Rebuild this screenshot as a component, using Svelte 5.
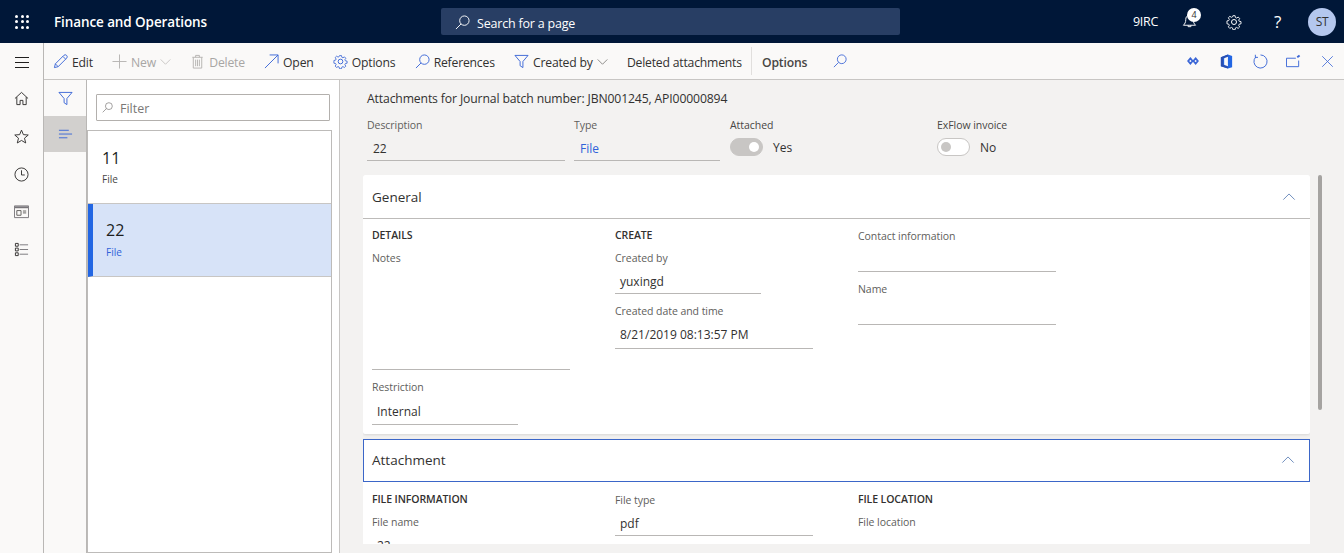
<script>
	const actions = [
		{ label: 'Edit', icon: 'edit' },
		{ label: 'New', icon: 'plus', off: true, chevron: true },
		{ label: 'Delete', icon: 'trash', off: true },
		{ label: 'Open', icon: 'open' },
		{ label: 'Options', icon: 'gear' },
		{ label: 'References', icon: 'search' },
		{ label: 'Created by', icon: 'funnel', chevron: true },
		{ label: 'Deleted attachments' }
	];
	const records = [
		{ id: '11', type: 'File' },
		{ id: '22', type: 'File', selected: true }
	];
</script>

{#snippet icon(name, size = 16)}
	<svg width={size} height={size} viewBox="0 0 16 16" fill="none" stroke="currentColor" stroke-width="1">
		{#if name === 'edit'}
			<path d="M1.5 14.5l1-4L11.5 1.5a1.6 1.6 0 0 1 3 3L5.5 13.5zM2.5 10.5l3 3M10.500 2.500l3 3" />
		{:else if name === 'plus'}
			<path d="M8 .5v15M.5 8h15" />
		{:else if name === 'trash'}
			<path d="M2.500 3.500h11M6 3.500V1.500h4v2M3.500 3.500v11.500h9V3.500M6 6v7M8 6v7M10 6v7" />
		{:else if name === 'open'}
			<path d="M1 15L15 1M6 1h9v9" />
		{:else if name === 'gear'}
			<circle cx="8" cy="8" r="2.500" />
			<path d="M6.800 1h2.400l.4 2 1.300.6 1.800-1.100 1.600 1.700-1.100 1.700.6 1.300 2 .4v2.400l-2 .4-.6 1.300 1.100 1.800-1.700 1.600-1.700-1.100-1.300.6-.4 2H6.800l-.4-2-1.300-.6-1.800 1.100-1.600-1.700 1.100-1.700-.6-1.300-2-.4V6.800l2-.4.6-1.300L1.700 3.300l1.700-1.600 1.700 1.100 1.300-.6z" transform="translate(.8 .8) scale(.9)" />
		{:else if name === 'search'}
			<circle cx="10" cy="6" r="5" />
			<path d="M6.400 9.600L1 15" />
		{:else if name === 'funnel'}
			<path d="M1 1.500h14L9.500 8v6.500l-3-2V8z" />
		{:else if name === 'chevron'}
			<path d="M1 5l7 7 7-7" />
		{:else if name === 'up'}
			<path d="M1.500 11L8 4.500l6.500 6.500" />
		{:else if name === 'home'}
			<path d="M1 8l7-6.500L15 8M3 6.500V14.500h3.500V10h3v4.500H13V6.500" />
		{:else if name === 'star'}
			<path d="M8 1.200l2 4.800 5.200.4-4 3.400 1.300 5.100L8 12.200l-4.500 2.700 1.300-5.100-4-3.400L6 6z" />
		{:else if name === 'clock'}
			<circle cx="8" cy="8" r="7" />
			<path d="M8 3.500V8.500H11.500" />
		{:else if name === 'workspace'}
			<path d="M.5 2h15v12.500H.5z" stroke="#77757a" />
			<path d="M1 3.500h14" stroke="#77757a" stroke-width="2" />
			<path d="M3 7h4.500v5H3zM9.500 7.500h3.500M9.500 9.500h3.500" stroke="#605e5c" />
		{:else if name === 'list'}
			<path d="M1.500 1.500h3v3h-3zM1.500 6.500h3v3h-3zM1.500 11.500h3v3h-3z" />
			<path d="M6 3h9M6 8h9M6 13h9" stroke="#77757a" />
		{:else if name === 'lines'}
			<path d="M1 3.500h10.500M1 7.500h14M1 11.500h9" />
		{:else if name === 'bell'}
			<path d="M8 1.500c-3 0-4 2-4 4.500 0 3-1 4.500-2.500 6h13C13 10.500 12 9 12 6c0-2.500-1-4.500-4-4.500zM6.500 12v1.500h3V12" />
		{:else if name === 'diamonds'}
			<path d="M5 5L7.500 8 5 11 2.500 8zM11 5L13.500 8 11 11 8.500 8z" stroke-width="2" />
		{:else if name === 'office'}
			<path d="M9.500 .5L2 3.500v9.500L9.500 15.500 14 14V2z" fill="#2266e3" stroke="none" />
			<path d="M2 3.500L9.500 .5V3L4.500 4.500V11.500L9.500 13V15.500L2 13z" fill="#2a4fb0" stroke="none" />
			<path d="M9.500 3L5.500 4.500v7l4 1.500z" fill="#faf9f8" stroke="none" />
		{:else if name === 'refresh'}
			<path d="M8 1a7 7 0 1 1-5 2.100" />
			<path d="M2.500 .8v2.800h2.800" />
		{:else if name === 'popout'}
			<path d="M13.500 7v6.500H.5V4.500h10" />
			<path d="M12 3.500l2.500-2" stroke-width="2" />
		{:else if name === 'close'}
			<path d="M1.500 1.500l13 13M14.500 1.500l-13 13" />
		{/if}
	</svg>
{/snippet}

<div class="page">
	<header class="topbar">
		<div class="waffle">
			{#each Array(9) as _}<span></span>{/each}
		</div>
		<div class="brand">Finance and Operations</div>
		<div class="search">{@render icon('search', 15)}<span>Search for a page</span></div>
		<div class="top-right">
			<span class="company">9IRC</span>
			<span class="bell">{@render icon('bell', 15)}<b>4</b></span>
			<span class="top-icon">{@render icon('gear')}</span>
			<span class="help">?</span>
			<span class="avatar">ST</span>
		</div>
	</header>

	<div class="main">
		<nav class="rail">
			<div class="burger"><span></span><span></span><span></span></div>
			{#each ['home', 'star', 'clock', 'workspace', 'list'] as name}
				<div class="rail-item">{@render icon(name, 15)}</div>
			{/each}
		</nav>

		<div class="work">
			<div class="commands">
				{#each actions as a}
					<div class="cmd" class:off={a.off}>
						{#if a.icon}<span class="cmd-icon">{@render icon(a.icon, 15)}</span>{/if}
						<span class="cmd-label">{a.label}</span>
						{#if a.chevron}<span class="cmd-chev">{@render icon('chevron', 11)}</span>{/if}
					</div>
				{/each}
				<div class="cmd options"><span class="cmd-label">Options</span></div>
				<div class="cmd find">{@render icon('search', 14)}</div>
				<div class="cmd-right">
					<span>{@render icon('diamonds', 14)}</span>
					<span>{@render icon('office', 15)}</span>
					<span>{@render icon('refresh', 15)}</span>
					<span>{@render icon('popout', 15)}</span>
					<span>{@render icon('close', 13)}</span>
				</div>
			</div>

			<div class="panes">
				<div class="filter-rail">
					<div class="fr-item">{@render icon('funnel', 15)}</div>
					<div class="fr-item active">{@render icon('lines', 15)}</div>
				</div>

				<aside class="list-pane">
					<div class="filter-box">{@render icon('search', 11)}<span>Filter</span></div>
					<div class="records">
						{#each records as r}
							<div class="record" class:selected={r.selected}>
								<div class="rec-id">{r.id}</div>
								<div class="rec-type">{r.type}</div>
							</div>
						{/each}
					</div>
				</aside>

				<section class="details">
					<div class="caption">Attachments for Journal batch number: JBN001245, API00000894</div>
					<div class="head-fields">
						<div class="field f-desc">
							<label>Description</label>
							<div class="value">22</div>
						</div>
						<div class="field f-type">
							<label>Type</label>
							<div class="value link">File</div>
						</div>
						<div class="toggle-field f-attached">
							<label class="strong">Attached</label>
							<div class="toggle-row"><span class="toggle on"></span><span>Yes</span></div>
						</div>
						<div class="toggle-field">
							<label class="strong">ExFlow invoice</label>
							<div class="toggle-row"><span class="toggle"></span><span>No</span></div>
						</div>
					</div>

					<div class="scroll-area">
						<div class="cards">
							<div class="card">
								<div class="card-head">
									<span>General</span>
									<span class="card-chev">{@render icon('up', 14)}</span>
								</div>
								<div class="card-body general">
									<div class="col col-a">
										<h4>DETAILS</h4>
										<label class="first">Notes</label>
										<div class="notes"></div>
										<label class="restrict">Restriction</label>
										<div class="value w146 tall">Internal</div>
									</div>
									<div class="col col-b">
										<h4>CREATE</h4>
										<label class="first">Created by</label>
										<div class="value w146">yuxingd</div>
										<label class="next">Created date and time</label>
										<div class="value w198 tall">8/21/2019 08:13:57 PM</div>
									</div>
									<div class="col col-c">
										<label class="contact">Contact information</label>
										<div class="value w198"></div>
										<label class="next">Name</label>
										<div class="value w198"></div>
									</div>
								</div>
							</div>

							<div class="card focused">
								<div class="card-head">
									<span>Attachment</span>
									<span class="card-chev">{@render icon('up', 14)}</span>
								</div>
								<div class="card-body attachment">
									<div class="col col-a">
										<h4>FILE INFORMATION</h4>
										<label class="first">File name</label>
										<div class="value">22</div>
									</div>
									<div class="col col-b">
										<label class="contact file-type">File type</label>
										<div class="value w198">pdf</div>
									</div>
									<div class="col col-c">
										<h4>FILE LOCATION</h4>
										<label class="first">File location</label>
									</div>
								</div>
							</div>
						</div>
						<div class="scrollbar"></div>
					</div>
				</section>
			</div>
		</div>
	</div>
</div>

<style>
	:global(body) {
		margin: 0;
		overflow: hidden;
	}
	.page {
		width: 1344px;
		height: 553px;
		display: flex;
		flex-direction: column;
		font-family: 'Open Sans', 'Liberation Sans', sans-serif;
		font-size: 12px;
		color: #323130;
		background: #f3f2f1;
		overflow: hidden;
	}
	svg {
		display: block;
		flex: none;
	}

	.topbar {
		height: 43px;
		flex: none;
		display: flex;
		align-items: center;
		background: #001738;
		color: #fff;
	}
	.waffle {
		width: 14px;
		margin-left: 15px;
		display: grid;
		grid-template-columns: repeat(3, 3px);
		gap: 2.5px;
	}
	.waffle span {
		width: 3px;
		height: 3px;
		background: #fff;
		border-radius: 50%;
	}
	.brand {
		margin-left: 25px;
		width: 387px;
		font-size: 13.5px;
		font-weight: 600;
		letter-spacing: -0.1px;
	}
	.search {
		width: 459px;
		height: 27px;
		display: flex;
		align-items: center;
		gap: 7px;
		padding-left: 14px;
		box-sizing: border-box;
		background: #283e64;
		border-radius: 2px;
		font-size: 12.5px;
		letter-spacing: -0.2px;
	}
	.search svg {
		margin-top: 2px;
	}
	.search span {
		margin-top: 3px;
	}
	.top-right {
		flex: 1;
		display: flex;
		align-items: center;
		font-size: 12.5px;
		padding-left: 233px;
		letter-spacing: -0.3px;
	}
	.bell {
		margin-left: 24px;
		position: relative;
		display: block;
	}
	.bell b {
		position: absolute;
		left: 5px;
		top: -6px;
		width: 14px;
		height: 14px;
		border-radius: 50%;
		background: #fff;
		color: #323130;
		font-size: 9px;
		font-weight: 400;
		line-height: 14px;
		text-align: center;
	}
	.top-icon {
		margin-left: 29px;
	}
	.help {
		margin-left: 32px;
		font-size: 17px;
		width: 9px;
	}
	.avatar {
		margin-left: 25px;
		width: 28px;
		height: 28px;
		border-radius: 50%;
		background: #b4c7ee;
		color: #323130;
		font-size: 12px;
		line-height: 28px;
		text-align: center;
	}

	.main {
		flex: 1;
		display: flex;
		min-height: 0;
	}
	.rail {
		width: 43px;
		flex: none;
		background: #faf9f8;
		border-right: 1px solid #b9b7b5;
		color: #323130;
	}
	.burger {
		height: 36px;
		padding-top: 1px;
		display: flex;
		flex-direction: column;
		justify-content: center;
		align-items: center;
		gap: 4px;
	}
	.burger span {
		width: 14px;
		height: 1px;
		background: #201f1e;
	}
	.rail-item {
		height: 37.7px;
		display: flex;
		align-items: center;
		justify-content: center;
	}

	.work {
		flex: 1;
		display: flex;
		flex-direction: column;
		min-width: 0;
	}
	.commands {
		height: 36px;
		flex: none;
		display: flex;
		align-items: center;
		background: #faf9f8;
		border-bottom: 1px solid #c8c6c4;
		font-size: 12.2px;
		letter-spacing: -0.2px;
		color: #323130;
		padding-left: 9px;
	}
	.cmd {
		display: flex;
		align-items: center;
		margin-right: 19.25px;
	}
	.cmd-label {
		margin-top: 2px;
	}
	.cmd-icon {
		color: #3b66d6;
		margin-right: 4px;
	}
	.cmd-chev {
		margin-left: 4px;
		color: #605e5c;
	}
	.cmd.off {
		color: #a8a6a4;
	}
	.cmd.off .cmd-icon,
	.cmd.off .cmd-chev {
		color: #b5b3b1;
	}
	.options {
		margin-left: -10px;
		padding-left: 10px;
		height: 28px;
		border-left: 1px solid #e1dfdd;
		font-weight: 600;
		color: #484644;
		margin-right: 26px;
	}
	.find {
		color: #3b66d6;
		margin-right: 0;
	}
	.cmd-right {
		margin-left: auto;
		display: flex;
		align-items: center;
		color: #3b66d6;
	}
	.cmd-right span {
		width: 33.5px;
		display: flex;
		justify-content: center;
	}

	.panes {
		flex: 1;
		display: flex;
		min-height: 0;
	}
	.filter-rail {
		width: 42px;
		flex: none;
		background: #faf9f8;
		border-right: 1px solid #b9b7b5;
		color: #3b66d6;
	}
	.fr-item {
		height: 36px;
		display: flex;
		align-items: center;
		justify-content: center;
	}
	.active {
		background: #d2d0ce;
	}

	.list-pane {
		width: 252px;
		flex: none;
		background: #fff;
		border-right: 1px solid #c8c6c4;
	}
	.filter-box {
		margin: 14px 9px 0 9px;
		height: 25px;
		display: flex;
		align-items: center;
		gap: 7px;
		padding-left: 5px;
		border: 1px solid #b3b0ad;
		border-radius: 1px;
		color: #7a7876;
		font-size: 12.5px;
	}
	.filter-box span {
		margin-top: 2px;
	}
	.records {
		margin-top: 9px;
		margin-right: 7px;
		height: 423px;
		box-sizing: border-box;
		border: 1px solid #bdbbb9;
	}
	.record {
		height: 72px;
		padding-left: 14px;
		border-bottom: 1px solid #c8c6c4;
	}
	.rec-id {
		padding-top: 17px;
		font-size: 16px;
		line-height: 20px;
		color: #201f1e;
	}
	.rec-type {
		margin-top: 4px;
		font-size: 10px;
		line-height: 14px;
		color: #484644;
	}
	.record.selected {
		background: #d7e3f8;
		border-left: 5px solid #2266e3;
		padding-left: 13px;
	}
	.selected .rec-type {
		color: #2f62d9;
	}
	.selected .rec-id {
		padding-top: 16px;
	}
	.selected .rec-type {
		margin-top: 5px;
	}

	.details {
		flex: 1;
		min-width: 0;
		padding: 0 0 9px 23px;
		box-sizing: border-box;
		display: flex;
		flex-direction: column;
	}
	.caption {
		margin: 11px 0 0 4px;
		line-height: 16px;
		font-size: 12.2px;
		letter-spacing: -0.13px;
	}
	label {
		display: block;
		font-size: 10.5px;
		line-height: 14px;
		color: #605e5c;
		letter-spacing: -0.05px;
	}
	label.strong {
		color: #484644;
	}
	.head-fields {
		display: flex;
		margin: 11px 0 0 4px;
		height: 57px;
	}
	.field {
		margin-right: 9px;
	}
	.f-desc {
		width: 198px;
	}
	.f-type {
		width: 146px;
		margin-right: 10px;
	}
	.f-attached {
		width: 207px;
	}
	.field .value {
		padding-left: 6px;
	}
	.value {
		height: 27px;
		margin-top: 2px;
		padding-left: 5px;
		box-sizing: border-box;
		border-bottom: 1px solid #b9b7b5;
		font-size: 12px;
		line-height: 29px;
		color: #323130;
	}
	.value.tall {
		height: 29px;
		line-height: 29px;
	}
	.col-a .value.tall {
		line-height: 31px;
	}
	.link {
		color: #2f62d9;
	}
	.toggle-row {
		display: flex;
		align-items: center;
		gap: 10px;
		margin-top: 6px;
		height: 18px;
	}
	.toggle {
		width: 33px;
		height: 18px;
		box-sizing: border-box;
		border: 1px solid #c8c6c4;
		border-radius: 9px;
		background: #fff;
		display: block;
		position: relative;
	}
	.toggle::after {
		content: '';
		position: absolute;
		left: 3px;
		top: 3px;
		width: 10px;
		height: 10px;
		border-radius: 50%;
		background: #c8c6c4;
	}
	.toggle.on {
		background: #c8c6c4;
	}
	.toggle.on::after {
		left: 18px;
		background: #fff;
	}

	.scroll-area {
		flex: 1;
		min-height: 0;
		display: flex;
		overflow: hidden;
	}
	.cards {
		width: 947px;
		flex: none;
		overflow: hidden;
	}
	.scrollbar {
		width: 4px;
		height: 235px;
		margin-left: 8px;
		background: #a5a3a1;
		border-radius: 2px;
		flex: none;
	}
	.card {
		background: #fff;
		box-shadow: 0 1px 3px rgba(0, 0, 0, 0.12);
		border-radius: 2px;
		margin-bottom: 5px;
	}
	.card-head {
		height: 44px;
		box-sizing: border-box;
		border-bottom: 1px solid #bdbbb9;
		display: flex;
		align-items: center;
		justify-content: space-between;
		padding: 0 14px 0 9px;
		font-size: 13.5px;
		color: #323130;
	}
	.card-chev {
		color: #5c7fb5;
	}
	.focused .card-head {
		border: 1px solid #3b66c8;
		padding-left: 8px;
		padding-bottom: 2px;
		height: 43px;
	}
	.card-body {
		display: flex;
		padding-left: 9px;
	}
	.general {
		height: 215px;
	}
	.attachment {
		height: 70px;
	}
	.col-a {
		width: 243px;
	}
	.col-b {
		width: 243px;
	}
	h4 {
		margin: 9px 0 0;
		font-size: 10.5px;
		font-weight: 600;
		line-height: 14px;
		color: #323130;
		letter-spacing: -0.1px;
	}
	.attachment h4 {
		margin-top: 10px;
	}
	label.first {
		margin-top: 9px;
	}
	label.next {
		margin-top: 10px;
	}
	label.contact {
		margin-top: 10px;
	}
	label.file-type {
		margin-top: 11px;
	}
	.notes {
		width: 198px;
		height: 104px;
		border-bottom: 1px solid #b9b7b5;
	}
	label.restrict {
		margin-top: 10px;
	}
	.w146 {
		width: 146px;
	}
	.w198 {
		width: 198px;
	}
</style>
